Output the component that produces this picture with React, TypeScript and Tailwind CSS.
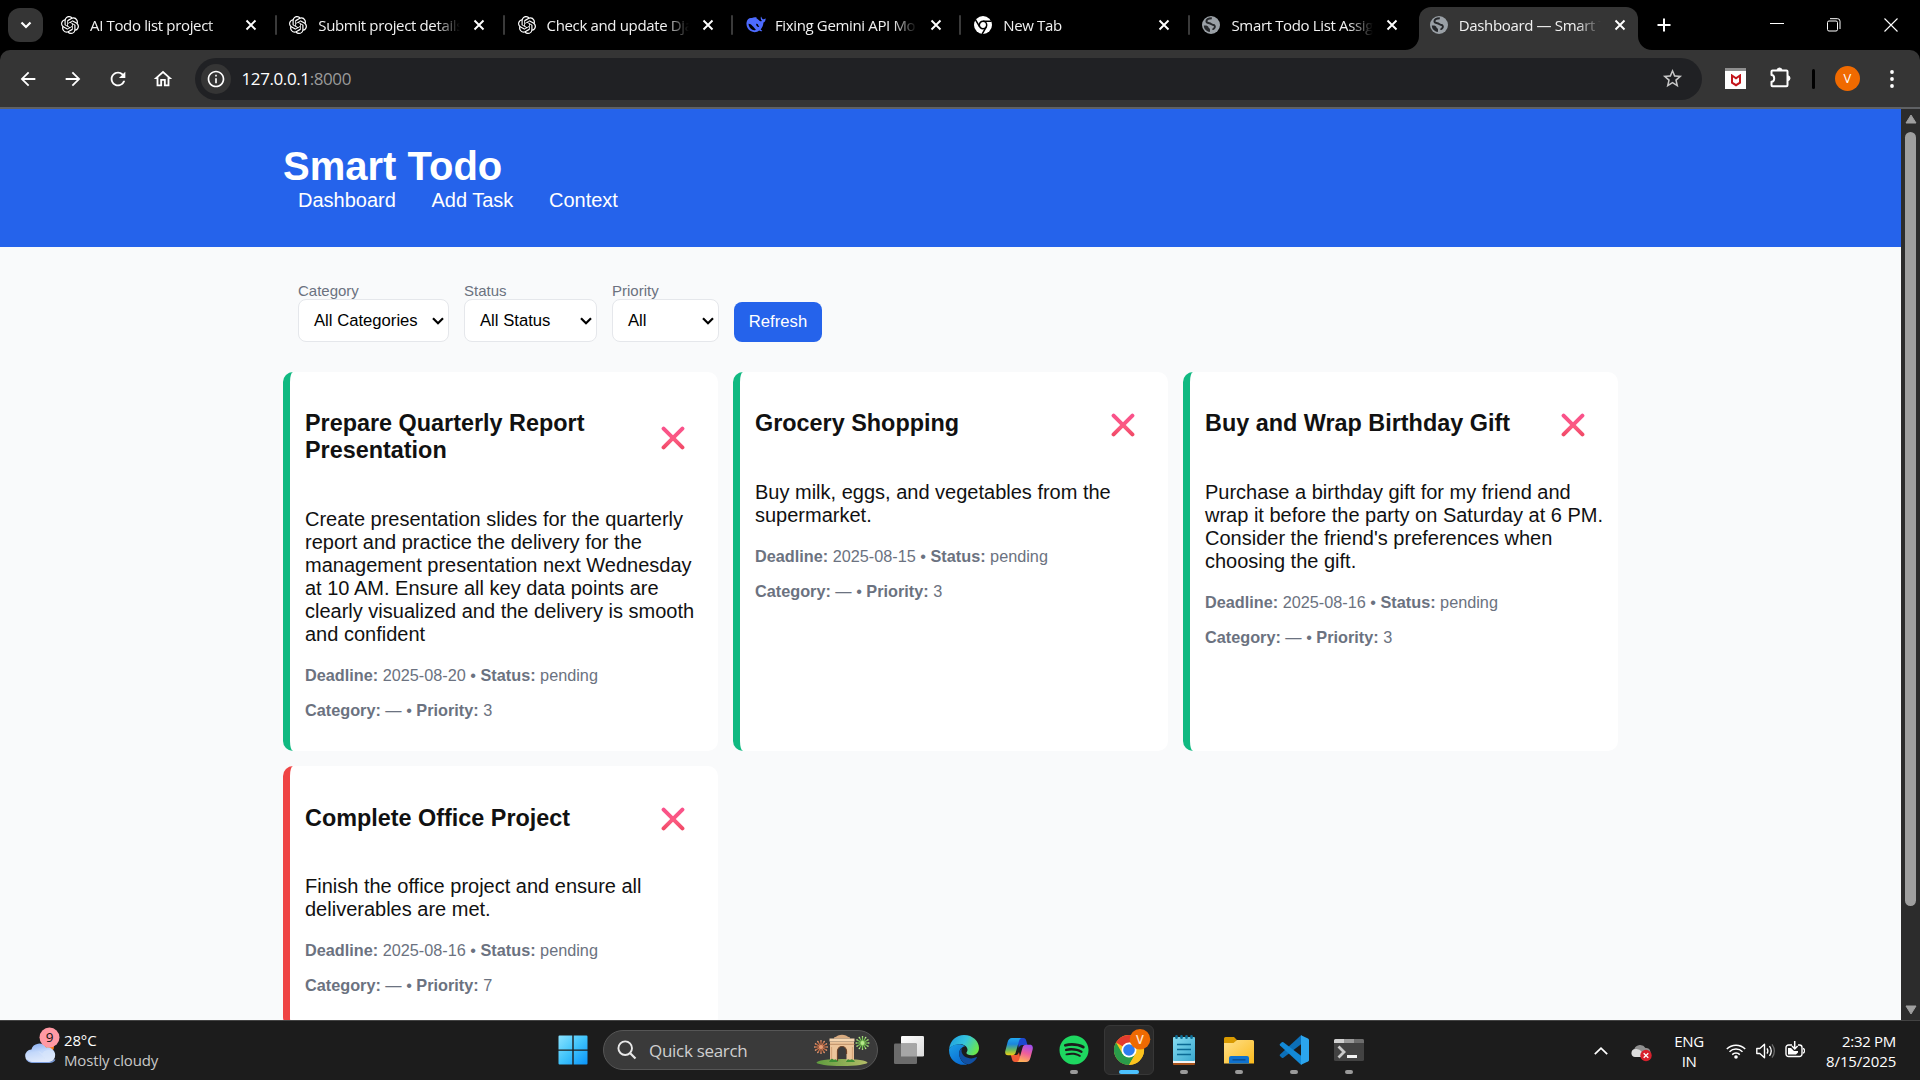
import React from "react";
import { SiOpenai } from "react-icons/si";
import { FaSpotify } from "react-icons/fa";
import {
  MdArrowBack,
  MdArrowForward,
  MdRefresh,
  MdOutlineHome,
  MdInfoOutline,
  MdStarBorder,
} from "react-icons/md";

/* ---------- Browser tab icons ---------- */

const Globe = () => (
  <svg viewBox="0 0 18 18" className="size-[18px]">
    <circle cx="9" cy="9" r="9" fill="#9aa0a6" />
    <path
      d="M9.800 2.200C7 2.200 4.600 3.200 4.400 5.200c-.1 1.500 1.500 1.800 3 2.100 1.600.3 1.700 1.300 3.200 1.500 1.900.2 2.600 1 2.200 2.400-.4 1.500-1.700 1.400-2 2.600"
      fill="none"
      stroke="#26282b"
      strokeWidth="1.900"
    />
    <path d="M1.800 9.600c2.200-.3 4.400.1 4.700 1.600.2 1.200 1.500 1 1.500 2.300 0 1 .1 1.500-.2 2.500C4.400 15.600 1.900 13 1.800 9.600z" fill="#26282b" />
  </svg>
);

const Whale = () => (
  <svg viewBox="0 0 20 18" className="h-[18px] w-5">
    <path
      d="M19.600 2.600c-.4-.2-.8.3-1.200.5-.8.4-1.500.2-2.100-.4-.8-.8-.6-1.700-1.300-2.100-.6 1.700-.2 3.200.9 4.200-.6.700-1.300.6-2.100.1-1-.7-1.800-1.700-2.900-2.400-.5-.4-1-.7.100-.8C9.300.9 7.300 1.300 6 2 3.200 1.400.9 3.300.5 6.700.1 10.400 1.800 13.400 4.600 15c2.900 1.700 6.300 1.500 8.500-.4 1.300.7 2.500.8 3 .3.5-.6-.8-.6-1.400-1.500 1.700-1.900 2.600-4.300 2.800-6.800 1.400-.6 2.300-2.300 2.100-4zM9.900 13.700C7.500 11.500 5.600 7.700 2.500 7.800c.2 2.800 1.700 5.400 4.400 6.300 1.100.3 2.200.1 3-.4zm.3-5.900c.9-.5 2.100.5 2.200 1.800.1.700.600.8.9 1.300-1.600.4-3.400-1.400-3.100-3.100z"
      fill="#4d6bfe"
      fillRule="evenodd"
    />
  </svg>
);

const ChromeMono = () => (
  <svg viewBox="0 0 18 18" className="size-[18px]">
    <circle cx="9" cy="9" r="9" fill="#fff" />
    <circle cx="9" cy="9" r="3.700" fill="none" stroke="#000" strokeWidth="1.500" />
    <path d="M9 5.200h8.400M5.700 10.900 1.600 3.900M12.300 10.900 8.200 18" stroke="#000" strokeWidth="1.500" />
  </svg>
);

const Gpt = () => <SiOpenai className="size-[18px] text-white" />;

const CloseX = () => (
  <svg viewBox="0 0 12 12" className="size-3 shrink-0">
    <path d="M1.500 1.500l9 9M10.500 1.500l-9 9" stroke="#fff" strokeWidth="1.900" />
  </svg>
);

const tabs = [
  { icon: <Gpt />, title: "AI Todo list project" },
  { icon: <Gpt />, title: "Submit project details" },
  { icon: <Gpt />, title: "Check and update Dja" },
  { icon: <Whale />, title: "Fixing Gemini API Mo" },
  { icon: <ChromeMono />, title: "New Tab" },
  { icon: <Globe />, title: "Smart Todo List Assig" },
];

const TabBody = ({ icon, title }: { icon: React.ReactNode; title: string }) => (
  <>
    <span className="flex w-[29px] shrink-0 items-center">{icon}</span>
    <span className="mr-[8px] w-[147px] whitespace-nowrap text-[15px] leading-6 tracking-[-0.35px] text-[#f1f1f1] [mask-image:linear-gradient(to_right,#000_118px,transparent_142px)]">
      {title}
    </span>
    <CloseX />
  </>
);

const TabStrip = () => (
  <div className="flex h-[50px] bg-black font-['Open_Sans',sans-serif]">
    <div className="mt-2 ml-2 flex h-[34px] w-[35px] items-center justify-center rounded-xl bg-[#353535]">
      <svg viewBox="0 0 12 8" className="h-2 w-3">
        <path d="M1.500 1.500 6 6l4.500-4.500" fill="none" stroke="#fff" strokeWidth="2.200" />
      </svg>
    </div>
    <div className="ml-[6px] flex">
      {tabs.map((t, i) => (
        <div key={t.title} className="flex h-[50px] w-[228.3px] items-center pl-[12px]">
          <TabBody {...t} />
          {i < 5 && <span className="ml-[17.5px] h-5 w-[2px] rounded bg-[#3a3a3a]" />}
        </div>
      ))}
      <div className="relative mt-[7px] flex h-[43px] w-[219px] items-center rounded-t-xl bg-[#353535] pb-[7px] pl-[11px]">
        <TabBody icon={<Globe />} title="Dashboard — Smart T" />
        <svg viewBox="0 0 14 14" className="absolute -left-[14px] bottom-0 size-[14px]">
          <path d="M14 0v14H0A14 14 0 0 0 14 0z" fill="#353535" />
        </svg>
        <svg viewBox="0 0 14 14" className="absolute -right-[14px] bottom-0 size-[14px]">
          <path d="M0 0v14h14A14 14 0 0 1 0 0z" fill="#353535" />
        </svg>
      </div>
    </div>
    <svg viewBox="0 0 14 14" className="mt-[18px] ml-[19px] size-[14px]">
      <path d="M7 0.500v13M0.500 7h13" stroke="#fff" strokeWidth="2" />
    </svg>
    <div className="mr-[22px] ml-auto flex gap-[43px] pt-[18px]">
      <svg viewBox="0 0 14 14" className="size-[14px]">
        <path d="M0 5.500h14" stroke="#fff" strokeWidth="1" />
      </svg>
      <svg viewBox="0 0 14 14" className="size-[14px]">
        <rect x="0.500" y="3" width="10" height="10" rx="1.500" fill="none" stroke="#fff" />
        <path d="M3 .7h7.500a2.500 2.500 0 0 1 2.500 2.500V11" fill="none" stroke="#fff" />
      </svg>
      <svg viewBox="0 0 14 14" className="size-[14px]">
        <path d="M.5.500l13 13M13.500.500l-13 13" stroke="#fff" strokeWidth="1.100" />
      </svg>
    </div>
  </div>
);

const Toolbar = () => (
  <div className="bg-black">
    <div className="flex h-[57px] items-center rounded-t-[10px] bg-[#353535] font-['Open_Sans',sans-serif]">
      <div className="flex gap-[23px] pl-[16.5px] text-white">
        <MdArrowBack className="size-[22px]" />
        <MdArrowForward className="size-[22px]" />
        <MdRefresh className="size-[22px]" />
        <MdOutlineHome className="size-[22px]" />
      </div>
      <div className="ml-[21.5px] flex h-[42px] w-[1507px] items-center rounded-full bg-[#202124] pr-[18px] pl-[6px]">
        <div className="flex size-[30px] items-center justify-center rounded-full bg-[#353535] text-white">
          <MdInfoOutline className="size-5" />
        </div>
        <span className="ml-[10.500px] pt-px text-[17px] tracking-[-0.4px] text-white">
          127.0.0.1<span className="text-[#9a9a9a]">:8000</span>
        </span>
        <MdStarBorder className="ml-auto size-[23px] text-[#c7c7c7]" />
      </div>
      <div className="ml-[23px] flex h-[21px] w-[21px] items-center justify-center border-t-[3px] border-[#8f8f8f] bg-white">
        <svg viewBox="0 0 12 13" className="h-[13px] w-3">
          <path d="M2 1.500 6 4.300l4-2.800v7.200L6 11.200 2 8.700z" fill="none" stroke="#c4161c" strokeWidth="2" />
        </svg>
      </div>
      <svg viewBox="0 0 22 22" className="ml-[24px] mb-[3px] size-[22px]">
        <path
          d="M2.500 4.500h14a1 1 0 0 1 1 1v13.800a1 1 0 0 1-1 1h-14a1 1 0 0 1-1-1v-3.600c3.600-.2 3.600-6.400 0-6.600V5.500a1 1 0 0 1 1-1z"
          fill="none"
          stroke="#fff"
          strokeWidth="2"
          strokeLinejoin="round"
        />
        <path d="M7 4.500a2.500 2.500 0 0 1 5 0zM17.500 9.700a2.500 2.500 0 0 1 0 5z" fill="#fff" stroke="#fff" />
      </svg>
      <span className="ml-[20px] h-5 w-[3px] rounded bg-black" />
      <span className="ml-[20px] flex size-[25px] items-center justify-center rounded-full bg-[#f06a00] text-[13px] text-white">
        V
      </span>
      <svg viewBox="0 0 4 18" className="ml-[30px] h-[18px] w-1">
        <circle cx="2" cy="2" r="1.900" fill="#fff" />
        <circle cx="2" cy="9" r="1.900" fill="#fff" />
        <circle cx="2" cy="16" r="1.900" fill="#fff" />
      </svg>
    </div>
    <div className="h-[2px] bg-[#5f6164]" />
  </div>
);

/* ---------- Page ---------- */

const Select = ({ label, value, width }: { label: string; value: string; width: string }) => (
  <div className={width}>
    <div className="text-[15px] leading-[17px] text-[#6b7280]">{label}</div>
    <div className="flex h-[43px] items-center justify-between rounded-lg border border-[#e5e7eb] bg-white pr-[4px] pl-[15px] text-[16.67px] text-black">
      {value}
      <svg viewBox="0 0 12 8" className="h-2 w-3">
        <path d="M1 1.200l5 5 5-5" fill="none" stroke="#000" strokeWidth="2.200" />
      </svg>
    </div>
  </div>
);

const CrossMark = ({ id }: { id: string }) => (
  <svg viewBox="0 0 24 24" className="mt-[2px] mr-[18px] size-6 shrink-0">
    <defs>
      <linearGradient id={id} gradientUnits="userSpaceOnUse" x1="0" y1="0" x2="0" y2="24">
        <stop offset="0" stopColor="#f9508c" />
        <stop offset="0.600" stopColor="#fb5a80" />
        <stop offset="1" stopColor="#ee4560" />
      </linearGradient>
    </defs>
    <path
      d="M2.600 2.600 21.400 21.400M21.400 2.600 2.600 21.400"
      stroke={`url(#${id})`}
      strokeWidth="4"
      strokeLinecap="round"
    />
  </svg>
);

const tasks = [
  {
    title: "Prepare Quarterly Report Presentation",
    text: "Create presentation slides for the quarterly report and practice the delivery for the management presentation next Wednesday at 10 AM. Ensure all key data points are clearly visualized and the delivery is smooth and confident",
    deadline: "2025-08-20",
    priority: 3,
    border: "border-[#10b981]",
  },
  {
    title: "Grocery Shopping",
    text: "Buy milk, eggs, and vegetables from the supermarket.",
    deadline: "2025-08-15",
    priority: 3,
    border: "border-[#10b981]",
  },
  {
    title: "Buy and Wrap Birthday Gift",
    text: "Purchase a birthday gift for my friend and wrap it before the party on Saturday at 6 PM. Consider the friend's preferences when choosing the gift.",
    deadline: "2025-08-16",
    priority: 3,
    border: "border-[#10b981]",
  },
  {
    title: "Complete Office Project",
    text: "Finish the office project and ensure all deliverables are met.",
    deadline: "2025-08-16",
    priority: 7,
    border: "border-[#ef4444]",
  },
];

const Page = () => (
  <div className="h-[911px] flex-1 overflow-hidden bg-[#f9fafb] font-['Liberation_Sans',Arial,sans-serif] text-[#111]">
    <div className="h-[138px] bg-[#2563eb] pt-[35px] pl-[283px] text-white">
      <h1 className="text-[40px] leading-[45px] font-bold">Smart Todo</h1>
      <nav className="flex gap-[35.6px] pl-[15px] text-[20px] leading-[23px]">
        <span>Dashboard</span>
        <span>Add Task</span>
        <span>Context</span>
      </nav>
    </div>
    <div className="mx-auto w-[1335px] pt-[35px]">
      <div className="flex items-end gap-[15px] pl-[15px]">
        <Select label="Category" value="All Categories" width="w-[151px]" />
        <Select label="Status" value="All Status" width="w-[133px]" />
        <Select label="Priority" value="All" width="w-[107px]" />
        <div className="flex h-10 w-[88px] items-center justify-center rounded-lg bg-[#2563eb] pb-px text-[16.67px] text-white">
          Refresh
        </div>
      </div>
      <div className="mt-[30px] grid grid-cols-3 gap-[15px]">
        {tasks.map((t, i) => (
          <div key={t.title} className={`rounded-[10px] border-l-[7px] bg-white p-[15px] ${t.border}`}>
            <div className="flex items-center justify-between">
              <h3 className="my-[23.4px] text-[23.4px] leading-[27px] font-bold">{t.title}</h3>
              <CrossMark id={`cross${i}`} />
            </div>
            <p className="my-5 text-[20px] leading-[23px]">{t.text}</p>
            <p className="mb-[16.25px] text-[16.25px] leading-[19px] text-[#6b7280]">
              <b>Deadline:</b> {t.deadline} • <b>Status:</b> pending
            </p>
            <p className="mb-[16.25px] text-[16.25px] leading-[19px] text-[#6b7280]">
              <b>Category:</b> — • <b>Priority:</b> {t.priority}
            </p>
          </div>
        ))}
      </div>
    </div>
  </div>
);

const Scrollbar = () => (
  <div className="flex h-[911px] w-[19px] flex-col items-center bg-[#2c2c2c] py-[5px]">
    <svg viewBox="0 0 12 10" className="h-[10px] w-3">
      <path d="M6 1 11 9H1z" fill="#9f9f9f" stroke="#9f9f9f" strokeLinejoin="round" />
    </svg>
    <div className="mt-[8px] h-[774px] w-[11px] rounded-full bg-[#9f9f9f]" />
    <svg viewBox="0 0 12 10" className="mt-auto h-[10px] w-3">
      <path d="M6 9 11 1H1z" fill="#9f9f9f" stroke="#9f9f9f" strokeLinejoin="round" />
    </svg>
  </div>
);

/* ---------- Taskbar ---------- */

const WeatherIcon = () => (
  <svg viewBox="0 0 36 38" className="h-[38px] w-9">
    <defs>
      <linearGradient id="wcloud" x1="0" y1="0" x2="0.300" y2="1">
        <stop offset="0" stopColor="#7fa8f0" />
        <stop offset="0.500" stopColor="#c3d8fb" />
        <stop offset="1" stopColor="#dfe9fb" />
      </linearGradient>
    </defs>
    <circle cx="23" cy="20" r="6" fill="#f97b16" />
    <path d="M7 35.500a6.500 6.500 0 0 1-.6-13A8 8 0 0 1 21 20.500a7.600 7.600 0 0 1 3 15z" fill="url(#wcloud)" />
    <path d="M13 24a7.500 7.500 0 0 1 4 2.500 8 8 0 0 1 12-1.500 7 7 0 0 1-5 10.500" fill="#dbe7fc" opacity="0.550" />
    <path d="M2 33q2 2.500 5 2.500h17q4 0 6-3" stroke="#7c9fe0" strokeWidth="1.200" fill="none" />
    <circle cx="24.500" cy="10.500" r="10" fill="#ff99a4" />
    <text x="24.500" y="15.300" textAnchor="middle" fontSize="13.500" fontFamily="Open Sans" fill="#111">
      9
    </text>
  </svg>
);

const StartIcon = () => (
  <svg viewBox="0 0 30 30" className="size-[30px]">
    <defs>
      <linearGradient id="start" x1="0" y1="0" x2="1" y2="1">
        <stop offset="0" stopColor="#8be3ff" />
        <stop offset="0.500" stopColor="#3fc3fb" />
        <stop offset="1" stopColor="#0a93f8" />
      </linearGradient>
    </defs>
    <path
      d="M1.500.500H14.300v14H.5v-13a1 1 0 0 1 1-1zM15.700.500H28.500a1 1 0 0 1 1 1v13H15.700zM.5 15.700h13.800v13.800H1.500a1 1 0 0 1-1-1zM15.700 15.700h13.800v12.800a1 1 0 0 1-1 1H15.700z"
      fill="url(#start)"
    />
  </svg>
);

const sparks = [0, 30, 60, 90, 120, 150, 180, 210, 240, 270, 300, 330];

const Spark = ({ cx, cy, color, tip }: { cx: number; cy: number; color: string; tip: string }) => (
  <g>
    {sparks.map((a) => (
      <g key={a} transform={`translate(${cx} ${cy}) rotate(${a})`}>
        <path d="M0 0V-6" stroke={color} strokeWidth="1.200" />
        <circle cx="0" cy="-6.300" r="0.800" fill={tip} />
      </g>
    ))}
    <circle cx={cx} cy={cy} r="2" fill={tip} />
  </g>
);

const ArchIcon = () => (
  <svg viewBox="0 0 56 32" className="h-8 w-14">
    <defs>
      <linearGradient id="grass" x1="0" y1="0" x2="1" y2="0">
        <stop offset="0" stopColor="#5f9c3e" />
        <stop offset="1" stopColor="#b4bd68" />
      </linearGradient>
    </defs>
    <ellipse cx="28" cy="28.500" rx="25.500" ry="3.500" fill="url(#grass)" />
    <Spark cx={7} cy={13} color="#c96f47" tip="#e59a72" />
    <Spark cx={48.500} cy={9} color="#77c552" tip="#b7e98a" />
    <path d="M20 3.500q2-.5 4-2 4-1.500 8 0 2 1.500 4 2v1H20z" fill="#d9ab80" />
    <path d="M15.500 4.500h25v3h-25z" fill="#f6d7b2" />
    <path d="M16 7.500h24V27h-7.500V17a4.500 4.500 0 0 0-9 0v10H16z" fill="#ecc59b" />
    <path d="M15.500 10.300h25" stroke="#b98860" strokeWidth="0.900" />
    <path d="M23.500 27V17a4.500 4.500 0 0 1 9 0v3" fill="none" stroke="#6d4329" strokeWidth="1.200" />
    <path d="M17.500 13v13M38.500 13v13" stroke="#d6a67b" strokeWidth="1.200" />
    <path d="M15.500 27q2-4 4.500-1 2-2 4 2h-9zM32 28q1-4 4-2 3-2 5 2z" fill="#3f8f34" />
  </svg>
);

const TaskViewIcon = () => (
  <svg viewBox="0 0 30 30" className="size-[30px]">
    <defs>
      <linearGradient id="tv" x1="0" y1="0" x2="1" y2="1">
        <stop offset="0" stopColor="#ffffff" />
        <stop offset="1" stopColor="#dadada" />
      </linearGradient>
    </defs>
    <rect x="7" y="1" width="23" height="20.500" rx="1.300" fill="url(#tv)" />
    <rect x="0" y="8.500" width="23" height="20.500" rx="1.300" fill="#6b6b6b" />
    <path d="M7 8.500h14.700A1.300 1.300 0 0 1 23 9.800v11.700H7z" fill="#a6a6a6" />
  </svg>
);

const EdgeIcon = () => (
  <svg viewBox="0 0 30 30" className="size-[30px]">
    <defs>
      <linearGradient id="edgeTop" x1="0" y1="0.200" x2="1" y2="0.600">
        <stop offset="0" stopColor="#1f9fe0" />
        <stop offset="0.500" stopColor="#35c4dd" />
        <stop offset="1" stopColor="#6be84a" />
      </linearGradient>
      <linearGradient id="edgeSide" x1="0" y1="0" x2="0.600" y2="1">
        <stop offset="0" stopColor="#1ba0e6" />
        <stop offset="1" stopColor="#0a6cd2" />
      </linearGradient>
    </defs>
    <path d="M.1 14C1 5.500 7.500 0 15 0c9 0 15 6.500 15 13 0 4.500-3 7.300-7.200 7.300-3.300 0-5.400-1-5.400-2.200 0-.8 1.100-1.300 1.100-3.300 0-3-3-5.600-7.200-5.600C5.600 9.200 2 11.500.1 14z" fill="url(#edgeTop)" />
    <path d="M.1 14c2-3.300 6-5 10.500-4.800 2.300.1 4.300 1 5.500 2-3.800.6-5.900 3.800-5.900 7.300 0 5.200 3.300 9.500 8 11C8 31.500-.8 24 .1 14z" fill="url(#edgeSide)" />
    <path d="M12.800 13c-1.800 1.500-2.600 3.500-2.600 5.500 0 6 5 11 9.500 10.800 3-.8 6.300-3.300 8-6.300.4-.8-.2-1.100-.8-.7-1.400.7-3 1.100-4.700 1.100-5 0-9-3-9.600-6.600-.200-1.400 0-2.700.2-3.800z" fill="#1150a3" />
  </svg>
);

const CopilotIcon = () => (
  <svg viewBox="0 0 30 30" className="size-[30px]">
    <defs>
      <linearGradient id="cpL" x1="0.300" y1="0" x2="0.300" y2="1">
        <stop offset="0" stopColor="#22a9f0" />
        <stop offset="0.350" stopColor="#1b86dd" />
        <stop offset="0.700" stopColor="#6dbb5a" />
        <stop offset="1" stopColor="#f3cf12" />
      </linearGradient>
      <linearGradient id="cpR" x1="0.700" y1="0" x2="0.400" y2="1">
        <stop offset="0" stopColor="#a04ff0" />
        <stop offset="0.500" stopColor="#ef5f9a" />
        <stop offset="1" stopColor="#ffb257" />
      </linearGradient>
    </defs>
    <path d="M13 3h6.500c1.600 0 2.300 1 2.700 2.500L23.500 10h-5c-2 0-3.200 1-3.700 3z" fill="#1d49cf" />
    <path d="M17 27h-6c-1.700 0-2.500-1-3-2.700L6.800 20h4.500c2 0 3-.8 3.700-3z" fill="#ef5a35" />
    <path d="M8 3h9.500c-1.500.4-2 1.500-2.500 3l-3.300 11.500c-.5 1.700-1.500 2.800-3.500 2.800H4C1.500 20.300.800 18 1.300 16L3.500 7.500C4.300 4.600 5.500 3 8 3z" fill="url(#cpL)" />
    <path d="M22 27h-9c1.300-.5 1.900-1.500 2.300-3l3.200-11.200c.5-1.700 1.500-3 3.500-3H26c2.500 0 3.200 2.400 2.700 4.400l-2.200 8.300C25.700 25.500 24.500 27 22 27z" fill="url(#cpR)" />
  </svg>
);

const ChromeIcon = () => (
  <svg viewBox="0 0 38 38" className="absolute top-[2px] left-[9px] size-[38px]">
    <g transform="translate(0 7)">
      <circle cx="15" cy="15" r="15" fill="#fcc31e" />
      <path d="M15 15 2 7.500A15 15 0 0 1 28 7.500H15z" fill="#e33b2e" />
      <path d="M2 7.500A15 15 0 0 0 15 30l6.500-11.300L15 22 8.500 18.700z" fill="#2a9c4a" />
      <path d="M15 7.500h13A15 15 0 0 1 15 30l6.500-11.300z" fill="#fcc31e" />
      <circle cx="15" cy="15" r="7.500" fill="#fff" />
      <circle cx="15" cy="15" r="5.800" fill="#2e7df0" />
    </g>
    <circle cx="26" cy="11.300" r="10.300" fill="#ee6a02" />
    <text x="26" y="16" textAnchor="middle" fontSize="12.500" fontFamily="Open Sans" fontWeight="600" fill="#ffe3cc">
      V
    </text>
  </svg>
);

const NotepadIcon = () => (
  <svg viewBox="0 0 30 30" className="size-[30px]">
    <defs>
      <linearGradient id="np" x1="0" y1="0" x2="1" y2="1">
        <stop offset="0" stopColor="#86dcf0" />
        <stop offset="1" stopColor="#3aa9d0" />
      </linearGradient>
    </defs>
    <rect x="4" y="22" width="22" height="8" rx="1" fill="#a8521a" />
    <rect x="4" y="20" width="22" height="8" fill="#f3f3f3" />
    <rect x="4" y="2" width="22" height="24" rx="1" fill="url(#np)" />
    <path d="M8 9.500h14M8 14.500h14M8 19.500h14" stroke="#0b6a94" strokeWidth="1.700" />
    <path d="M7.500 1.300v1.400M12.500 1.300v1.400M17.500 1.300v1.400M22.500 1.300v1.400" stroke="#0e6f96" strokeWidth="2.600" strokeLinecap="round" />
  </svg>
);

const ExplorerIcon = () => (
  <svg viewBox="0 0 30 30" className="size-[30px]">
    <defs>
      <linearGradient id="fx" x1="0" y1="0" x2="1" y2="1">
        <stop offset="0" stopColor="#ffe08a" />
        <stop offset="1" stopColor="#fbba1c" />
      </linearGradient>
    </defs>
    <path d="M0 3.500A1.500 1.500 0 0 1 1.500 2H10l3 3-2 4H0z" fill="#d99a00" />
    <path d="M0 8h9.500l3.500-3h15.500A1.500 1.500 0 0 1 30 6.500v22H0z" fill="url(#fx)" />
    <path d="M5 28.500V23a2 2 0 0 1 2-2h16a2 2 0 0 1 2 2v5.500z" fill="#0f72cf" />
    <path d="M8.500 24.800h13" stroke="#0b4f93" strokeWidth="1.500" />
  </svg>
);

const CodeIcon = () => (
  <svg viewBox="0 0 30 30" className="size-[30px]">
    <path d="M22 .300 1 19.500q-.8.800 0 1.600l1.800 1.700q.8.600 1.600 0L23 8.500V.8z" fill="#0c6fb8" />
    <path d="M22 29.700 1 10.500q-.8-.8 0-1.600l1.800-1.700q.8-.6 1.600 0L23 21.500v7.700z" fill="#1389d6" />
    <path d="M22 .300 29 3.500q1 .5 1 1.600v19.800q0 1.100-1 1.600L22 29.700z" fill="#2ba5ee" />
  </svg>
);

const TerminalIcon = () => (
  <svg viewBox="0 0 30 30" className="size-[30px]">
    <rect x="0" y="4" width="30" height="22" rx="1.500" fill="#424242" />
    <path d="M0 8V5.500A1.500 1.500 0 0 1 1.500 4H10v4z" fill="#d0d0d0" />
    <path d="M10 4h10v4H10z" fill="#9a9a9a" />
    <path d="M20 4h8.500A1.500 1.500 0 0 1 30 5.500V8H20z" fill="#6d6d6d" />
    <path d="M4.500 11.500l5.500 5.500-5.500 5.500" fill="none" stroke="#c9c9c9" strokeWidth="2.800" />
    <path d="M13 21.500h10" stroke="#f2f2f2" strokeWidth="3" />
  </svg>
);

const AppSlot = ({ children, running }: { children: React.ReactNode; running?: boolean }) => (
  <div className="flex w-[55px] flex-col items-center pt-[14px]">
    {children}
    {running && <span className="mt-[5px] h-1 w-2 rounded-full bg-[#9a9a9a]" />}
  </div>
);

const Taskbar = () => (
  <div className="flex h-[60px] border-t border-[#434343] bg-[#1c1c1c] font-['Open_Sans',sans-serif] text-white">
    <div className="flex w-[545px] pt-[6px] pl-[24.5px]">
      <WeatherIcon />
      <div className="ml-[3.5px] pt-[3px] text-[15px] leading-5 tracking-[-0.15px]">
        <div>28°C</div>
        <div className="text-[#c8c8c8]">Mostly cloudy</div>
      </div>
    </div>
    <div className="w-[58px] pt-[14px] pl-[12.5px]">
      <StartIcon />
    </div>
    <div className="mt-[9px] flex h-10 w-[275px] items-center rounded-full border border-[#565656] bg-[#3a3a3a] pr-[7px] pl-[13px]">
      <svg viewBox="0 0 20 20" className="size-5">
        <circle cx="8.200" cy="8.200" r="6.800" fill="none" stroke="#e8e8e8" strokeWidth="1.900" />
        <path d="M13 13l5.500 5.500" stroke="#e8e8e8" strokeWidth="2.200" />
      </svg>
      <span className="ml-3 pt-[2px] text-[17px] tracking-[-0.3px] text-[#cfcfcf]">Quick search</span>
      <span className="ml-auto">
        <ArchIcon />
      </span>
    </div>
    <div className="ml-[3px] flex">
      <AppSlot><TaskViewIcon /></AppSlot>
      <AppSlot><EdgeIcon /></AppSlot>
      <AppSlot><CopilotIcon /></AppSlot>
      <AppSlot running><FaSpotify className="size-[30px] text-[#1ed760]" /></AppSlot>
      <div className="flex w-[55px] justify-center pt-1">
        <div className="relative h-[50px] w-[50px] rounded-md border border-[#373737] bg-[#2a2a2a]">
          <ChromeIcon />
          <span className="absolute bottom-0 left-[14px] h-1 w-5 rounded-full bg-[#4cc2ff]" />
        </div>
      </div>
      <AppSlot running><NotepadIcon /></AppSlot>
      <AppSlot running><ExplorerIcon /></AppSlot>
      <AppSlot running><CodeIcon /></AppSlot>
      <AppSlot running><TerminalIcon /></AppSlot>
    </div>
    <div className="mr-[24px] ml-auto flex items-center text-[15px] leading-5 tracking-[-0.1px]">
      <svg viewBox="0 0 14 8" className="h-2 w-[14px]">
        <path d="M.8 7.200 7 1.200l6.200 6" fill="none" stroke="#fff" strokeWidth="1.700" />
      </svg>
      <svg viewBox="0 0 21 18" className="ml-[23px] mt-[4px] h-[18px] w-[21px]">
        <path d="M4 12.500A4 4 0 0 1 3.300 5 6.300 6.300 0 0 1 14.500 4a4.500 4.500 0 0 1 2.500 8.500z" fill="#8f8f8f" />
        <path d="M4 13A4 4 0 0 1 3.300 5.200Q8 4 11 8l1 5z" fill="#dedede" />
        <circle cx="15" cy="11.500" r="5.700" fill="#d8202c" />
        <path d="M12.700 9.200l4.600 4.600M17.300 9.200l-4.600 4.600" stroke="#fff" strokeWidth="1.300" />
      </svg>
      <div className="ml-[22px] w-[30px] text-center tracking-[-0.4px]">
        <div>ENG</div>
        <div>IN</div>
      </div>
      <svg viewBox="0 0 20 16" className="ml-[22px] h-4 w-5">
        <path d="M.8 6a13 13 0 0 1 18.400 0M3.500 8.800a9.200 9.200 0 0 1 13 0M6.200 11.600a5.400 5.400 0 0 1 7.600 0" fill="none" stroke="#fff" strokeWidth="1.500" />
        <circle cx="10" cy="14" r="1.800" fill="#fff" />
      </svg>
      <svg viewBox="0 0 20 16" className="ml-[10px] h-4 w-5">
        <path d="M.8 5.500h3L8.500 1.300v13.400L3.800 10.500h-3z" fill="none" stroke="#fff" strokeWidth="1.400" strokeLinejoin="round" />
        <path d="M11 5.300q1.800 2.700 0 5.400M13.500 3.200q3.500 4.800 0 9.600" fill="none" stroke="#fff" strokeWidth="1.300" />
        <path d="M16 1.300q4.700 6.700 0 13.400" fill="none" stroke="#6a6a6a" strokeWidth="1.300" />
      </svg>
      <svg viewBox="0 0 20 17" className="ml-[9px] mb-[2px] h-[17px] w-5">
        <path d="M7 4H3.500A2.500 2.500 0 0 0 1 6.500v6.500a2.500 2.500 0 0 0 2.500 2.500h11a2.500 2.500 0 0 0 2.500-2.500V6.500A2.500 2.500 0 0 0 14.500 4H13" fill="none" stroke="#fff" strokeWidth="1.400" />
        <path d="M3 7h3l3 3h4v1.500L11 13.500H3z" fill="#fff" />
        <path d="M18 7.500q1.500 0 1.500 2.200T18 12" fill="none" stroke="#fff" strokeWidth="1.300" />
        <path d="M9.700 0v7M7 5l2.800 3 2.800-3" fill="none" stroke="#fff" strokeWidth="1.500" />
      </svg>
      <div className="ml-[21px] w-[70px] text-right whitespace-nowrap">
        <div className="tracking-[-0.3px]">2:32 PM</div>
        <div>8/15/2025</div>
      </div>
    </div>
  </div>
);

export default function App() {
  return (
    <div className="h-[1080px] w-[1920px] overflow-hidden bg-black">
      <TabStrip />
      <Toolbar />
      <div className="flex">
        <Page />
        <Scrollbar />
      </div>
      <Taskbar />
    </div>
  );
}
